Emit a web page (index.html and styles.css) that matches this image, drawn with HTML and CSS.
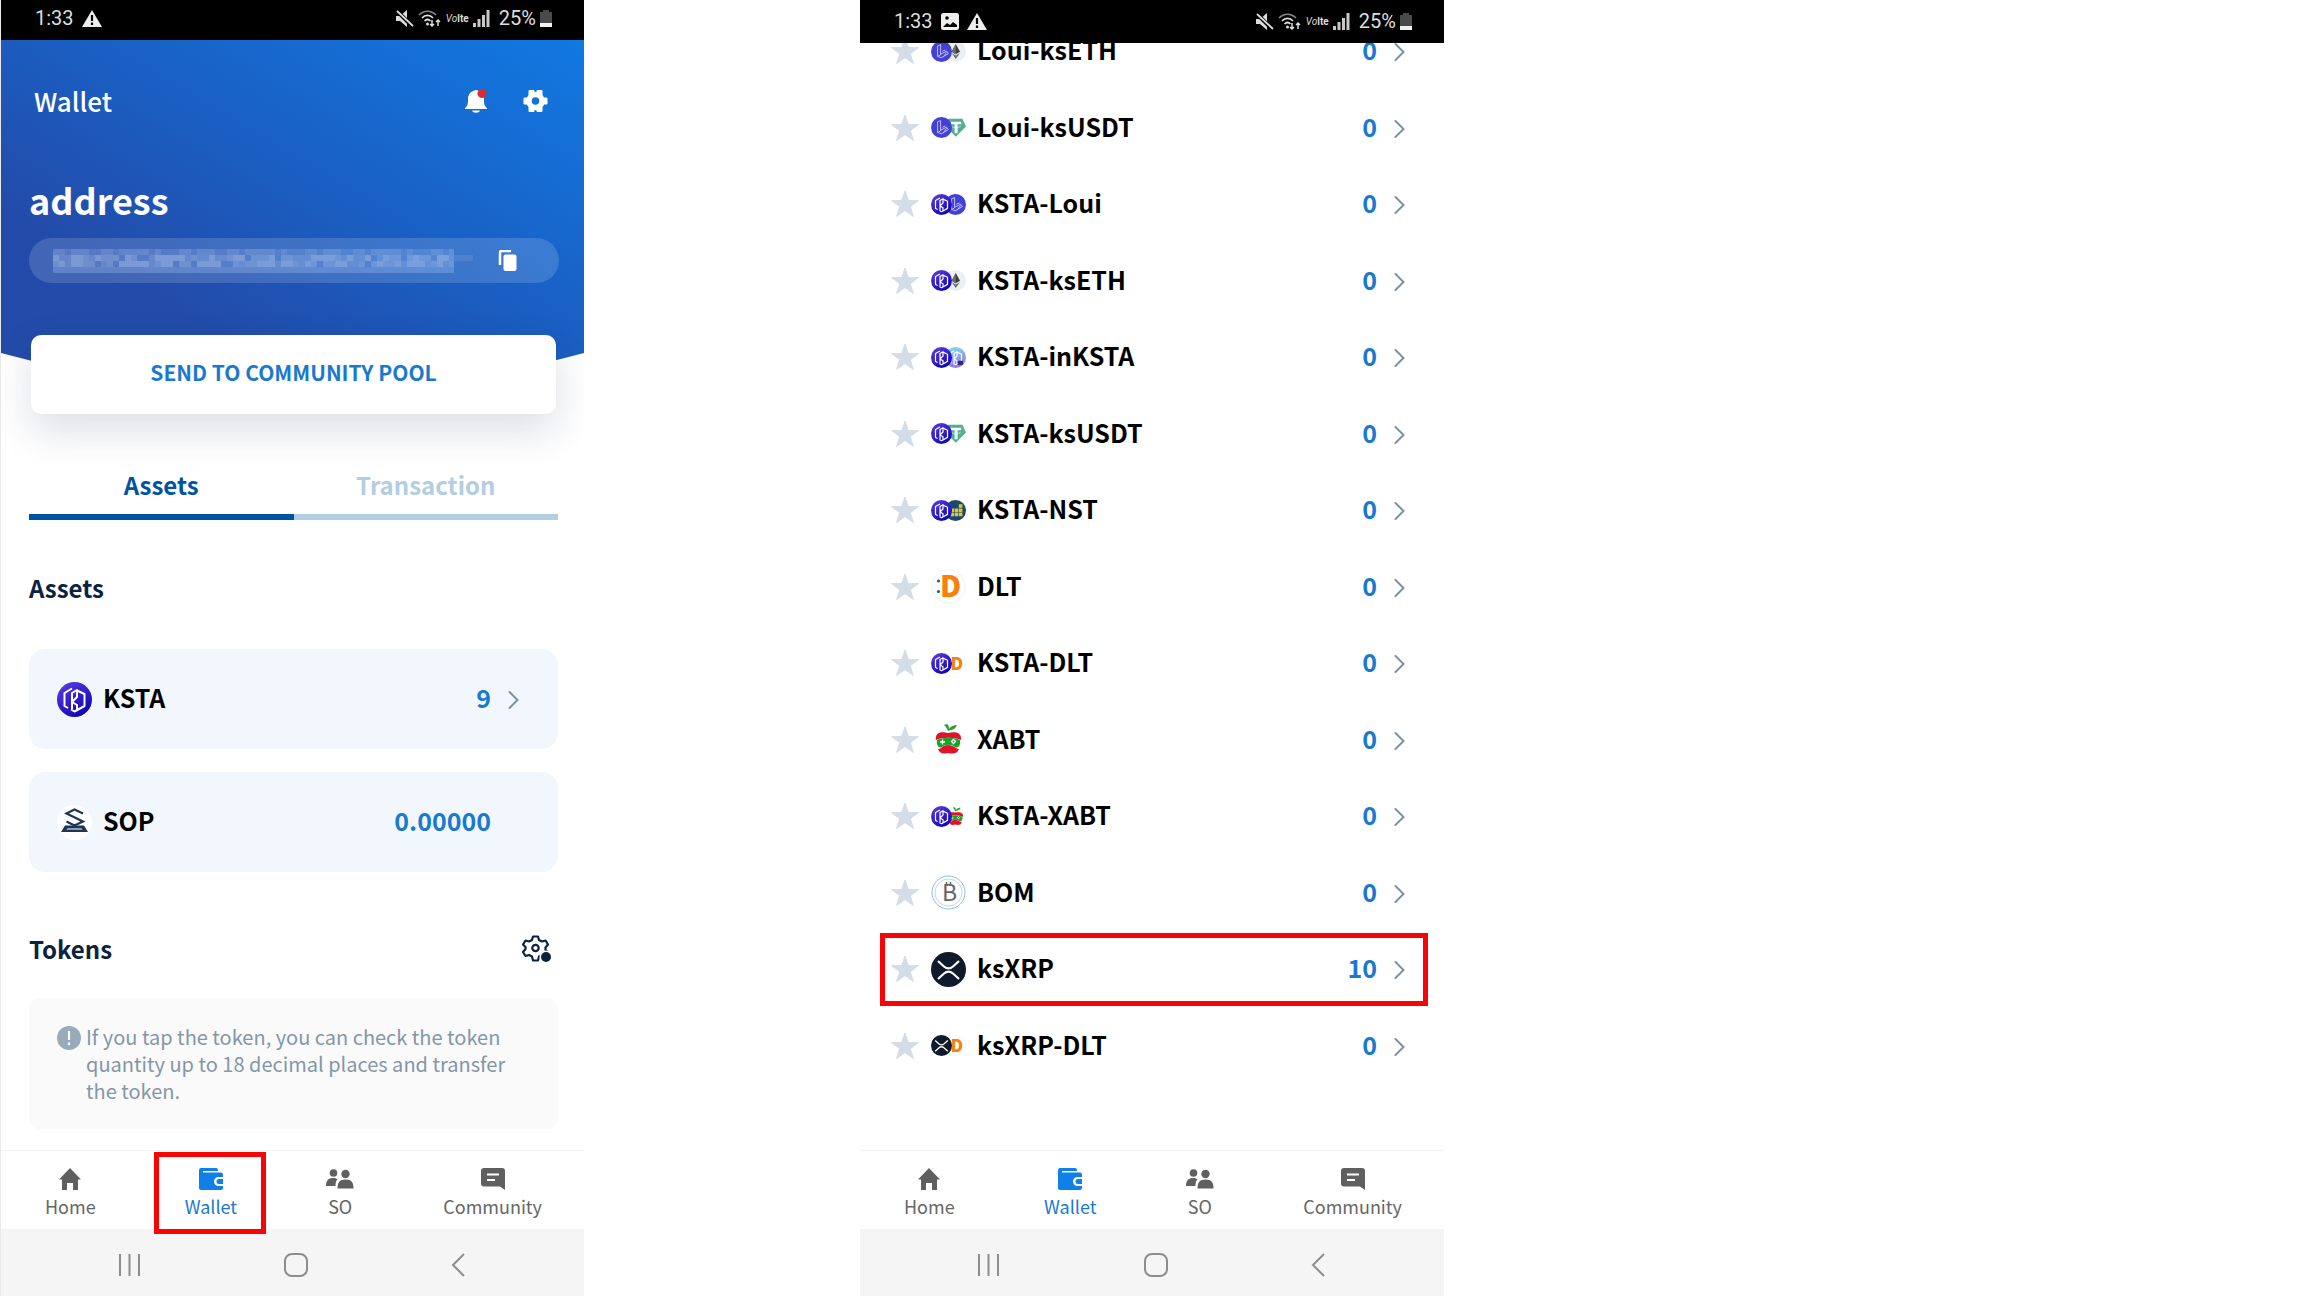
FILE: index.html
```
<!DOCTYPE html>
<html lang="en">
<head>
    <meta charset="UTF-8">
    <meta name="viewport" content="width=device-width, initial-scale=1.0">
    <title>Wallet</title>
    <link rel="stylesheet" href="styles.css">
</head>
<body>
    <!-- Shared icons -->
    <svg class="sprite" aria-hidden="true">
        <defs>
            <linearGradient id="kFill" x1="0" y1="0" x2="0.6" y2="1">
                <stop offset="0" stop-color="#5f3fe6"/>
                <stop offset="1" stop-color="#1206b4"/>
            </linearGradient>
            <linearGradient id="inFill" x1="0.4" y1="0" x2="0.7" y2="1">
                <stop offset="0" stop-color="#7fd8ee"/>
                <stop offset="1" stop-color="#9a6fe0"/>
            </linearGradient>
            <g id="kMark" fill="none" stroke="#fff" stroke-width="2" stroke-linejoin="round">
                <path d="M15 6.500 7.500 11v13L11 26"/>
                <path d="M20 8.500 27.500 12v12L17.500 29.500 14 27.500"/>
                <path d="M15 27V11l5-3v7l-5 5 5 3v5"/>
            </g>
            <symbol id="c-ksta" viewBox="0 0 35 35">
                <circle cx="17.500" cy="17.500" r="17.500" fill="url(#kFill)"/>
                <use href="#kMark"/>
            </symbol>
            <symbol id="c-inksta" viewBox="0 0 35 35">
                <circle cx="17.500" cy="17.500" r="17.500" fill="url(#inFill)"/>
                <use href="#kMark"/>
                <rect x="21" y="23" width="9" height="7" fill="#2b2a86"/>
            </symbol>
            <symbol id="c-loui" viewBox="0 0 35 35">
                <circle cx="17.500" cy="17.500" r="17.500" fill="#4340d6"/>
                <path d="M11 8l5-2v17l-5 3zM16 22l10-5 3 4-12 7-5-2M19 17l5-2M20 27l6-8" fill="none" stroke="#c4c6f6" stroke-width="1.600"/>
            </symbol>
            <symbol id="c-eth" viewBox="0 0 35 35">
                <circle cx="17.500" cy="17.500" r="17.500" fill="#eceff1"/>
                <path d="M18 5l7 13-7 4-7-4z" fill="#3c3c3d"/>
                <path d="M18 5v17l-7-4zM11 20l7 4 7-4-7 10z" fill="#6d6d6f"/>
            </symbol>
            <symbol id="c-usdt" viewBox="0 0 35 35">
                <path d="M5 3h24l6 13-17 17L1 16z" fill="#50af95"/>
                <path d="M9 8h18v4h-6v15h-5V12H9z" fill="#fff"/>
                <path d="M10 16c5 2 11 2 16 0" fill="none" stroke="#fff"/>
            </symbol>
            <symbol id="c-nst" viewBox="0 0 35 35">
                <circle cx="17.500" cy="17.500" r="17.500" fill="#174a6e"/>
                <path d="M9 21h6v6H9zM16 21h6v6h-6zM23 21h6v6h-6zM16 14h6v6h-6zM23 14h6v6h-6zM23 7h6v6h-6zM9 14h6v6H9z" fill="#e8c52c"/>
            </symbol>
            <symbol id="c-dlt" viewBox="0 0 35 35">
                <circle cx="17.500" cy="17.500" r="16.500" fill="#fff" stroke="#f1f1f1"/>
                <circle cx="7.500" cy="12" r="1.600" fill="#1f5f9c"/>
                <circle cx="7.500" cy="22.500" r="1.600" fill="#1f5f9c"/>
                <text x="9" y="28" class="coin-d">D</text>
            </symbol>
            <symbol id="c-xabt" viewBox="0 0 35 35">
                <path d="M17 9c-1-3-2-4-4-6l3-1c2 2 2 3 2 5 2-3 5-4 8-4-1 3-4 5-7 5z" fill="#1ea02b"/>
                <path d="M5 18c-1-7 4-9 12-7 8-2 14 0 13 7-6-3-19-3-25 0z" fill="#e3122b"/>
                <path d="M6 18c6-3 17-3 23 0 1 5-2 9-5 7-3-3-10-3-13 0-3 2-6-2-5-7z" fill="#16a52a"/>
                <path d="M9 20h5M11.500 17.500v5M22.500 17.500l2 2-2 2-2-2z" stroke="#fff" stroke-width="1.300" fill="none"/>
                <path d="M7 27c4 0 4-4 10-4s8 4 11 4c-2 5-5 5-11 4-5 1-8 1-10-4z" fill="#e3122b"/>
            </symbol>
            <symbol id="c-bom" viewBox="0 0 35 35">
                <circle cx="17.500" cy="17.500" r="16.500" fill="#fff" stroke="#8fbfd6"/>
                <circle cx="17.500" cy="17.500" r="13.500" fill="none" stroke="#bcd9e6"/>
                <path d="M15.500 7v3M19.500 7v3" stroke="#666" stroke-width="1.500"/>
                <text x="11" y="26" class="coin-b">B</text>
            </symbol>
            <symbol id="c-xrp" viewBox="0 0 35 35">
                <circle cx="17.500" cy="17.500" r="17.500" fill="#0f1b2b"/>
                <path d="M7 9l6 5.500c3 2.500 6 2.500 9 0L28 9M7 27l6-5.500c3-2.500 6-2.500 9 0l6 5.500" fill="none" stroke="#fff" stroke-width="2.200"/>
            </symbol>
            <symbol id="c-sop" viewBox="0 0 35 35">
                <circle cx="17.500" cy="17.500" r="17.500" fill="#fff"/>
                <path d="M26 8.500 17.500 4.500 9.500 8.500 26 16.500 17.500 20.500 9.500 16.500" fill="none" stroke="#1f3554" stroke-width="2.200"/>
                <path d="M8 20.500h19l4 6.500H4z" fill="#1f3554"/>
                <path d="M10.500 23h14l1 2h-16z" fill="#8e9db3"/>
            </symbol>
            <symbol id="i-star" viewBox="0 0 30 28">
                <path d="M15 1l3.300 9.600h10.200l-8.200 6.100 3.100 9.800L15 20.600l-8.400 5.900 3.100-9.800-8.200-6.100h10.200z" fill="#d3dde7" stroke="#d3dde7" stroke-linejoin="round"/>
            </symbol>
            <symbol id="i-chevron" viewBox="0 0 12 18">
                <path d="M1.500 1 9.500 9l-8 8" fill="none" stroke="#7b91a7" stroke-width="2" stroke-linecap="round"/>
            </symbol>
            <symbol id="i-warn" viewBox="0 0 20 17">
                <path d="M10 0l10 17H0z" fill="#eee"/>
                <path d="M10 5v6M10 12.500v2.500" stroke="#000" stroke-width="2.200"/>
            </symbol>
            <symbol id="i-photo" viewBox="0 0 18 17">
                <rect width="18" height="17" rx="2.500" fill="#eee"/>
                <circle cx="6" cy="5" r="1.800" fill="#000"/>
                <path d="M2 14l4-4 3 2 3-3 4 3v2z" fill="#000"/>
            </symbol>
            <symbol id="i-mute" viewBox="0 0 18 17">
                <path d="M0 6h4l7-6v17l-7-6H0z" fill="#ddd"/>
                <path d="M0 0l17 17" stroke="#000" stroke-width="4"/>
                <path d="M1 1l16 15" stroke="#ddd" stroke-width="1.800"/>
            </symbol>
            <symbol id="i-wifi" viewBox="0 0 24 17">
                <g fill="none" stroke="#ddd" stroke-width="1.700">
                    <path d="M1 5c5-5 12-5 17 0" stroke="#888"/>
                    <path d="M4 8c3-3.500 8-3.500 11 0M6.500 11c2-2 4-2 6 0"/>
                    <path d="M14 10v6M12 14l2 2 2-2M20 16v-6M18 12l2-2 2 2" stroke-width="1.500"/>
                </g>
                <circle cx="9.500" cy="14" r="1.500" fill="#ddd"/>
            </symbol>
            <symbol id="i-signal" viewBox="0 0 17 17">
                <path d="M0 13h3v4H0zM4.500 9h3v8h-3zM9 5h3v12H9zM13.500 0h3v17h-3z" fill="#c8c8c8"/>
            </symbol>
            <symbol id="i-battery" viewBox="0 0 12 17">
                <path d="M3 0h6v2h3v11H0V2h3z" fill="#4a4a4a"/>
                <path d="M0 13h12v4H0z" fill="#f2f2f2"/>
            </symbol>
            <symbol id="i-home" viewBox="0 0 22 22">
                <path d="M11 0l11 11.500h-3V22h-5v-7H8v7H3V11.500H0z" fill="#5f5f5f"/>
            </symbol>
            <symbol id="i-wallet" viewBox="0 0 24 22">
                <path d="M2 0h15a2 2 0 0 1 2 2v1H4v1.500h18a2 2 0 0 1 2 2V9h-4.500a4.500 4.500 0 0 0 0 9H24v2a2 2 0 0 1-2 2H2a2 2 0 0 1-2-2V2a2 2 0 0 1 2-2z" fill="#1180e6"/>
                <path d="M24 11h-4a2.500 2.500 0 0 0 0 5h4z" fill="#1180e6"/>
            </symbol>
            <symbol id="i-people" viewBox="0 0 28 22">
                <g fill="#5f5f5f">
                    <circle cx="7.500" cy="5" r="3.800"/>
                    <path d="M0 18c0-6 3-8 7-8 2 0 3 .4 4.500 1.300C10 13 9.500 15 9.500 18z"/>
                    <circle cx="19.500" cy="6" r="4.200"/>
                    <path d="M11.500 20.500c0-6 2-9 8-9s8 3 8 9z"/>
                </g>
            </symbol>
            <symbol id="i-chat" viewBox="0 0 24 22">
                <path d="M3 0h18a3 3 0 0 1 3 3v19l-5-3.500H3a3 3 0 0 1-3-3V3a3 3 0 0 1 3-3z" fill="#5f5f5f"/>
                <path d="M6 6.500h12M6 12h8" stroke="#fff" stroke-width="2.200"/>
            </symbol>
        </defs>
    </svg>

    <section class="phone wallet">
        <div class="status">
            <span>1:33</span>
            <svg width="20" height="17"><use href="#i-warn"/></svg>
            <div class="status-right">
                <svg width="18" height="17"><use href="#i-mute"/></svg>
                <svg width="24" height="17"><use href="#i-wifi"/></svg>
                <span class="lte">Vo<b>lte</b></span>
                <svg width="17" height="17"><use href="#i-signal"/></svg>
                <span class="percent">25%</span>
                <svg width="12" height="17"><use href="#i-battery"/></svg>
            </div>
        </div>

        <header class="hero">
            <div class="hero-top">
                <h1>Wallet</h1>
                <button class="icon-btn" aria-label="Notifications">
                    <svg width="22" height="24" viewBox="0 0 22 24">
                        <path d="M0 19c3-2 3-5 3-9 0-5 3-8 8-9 5 1 8 4 8 9 0 4 0 7 3 9v1H0z" fill="#fff"/>
                        <path d="M7 21.500h8c-1 3-7 3-8 0z" fill="#fff"/>
                        <circle cx="17" cy="4.500" r="4.500" fill="#d92d35"/>
                    </svg>
                </button>
                <button class="icon-btn" aria-label="Settings">
                    <svg width="25" height="24" viewBox="0 0 24 24">
                        <circle cx="12" cy="12" r="6.500" fill="none" stroke="#fff" stroke-width="5.500"/>
                        <path d="M5.500 1.500h5v5h-5zM13.500 1.500h5v5h-5zM5.500 17.500h5v5h-5zM13.500 17.500h5v5h-5zM.500 9h5v6h-5zM18.500 9h5v6h-5z" fill="#fff" stroke="#fff" stroke-linejoin="round"/>
                    </svg>
                </button>
            </div>
            <h2 class="address-title">address</h2>
            <div class="address">
                <!-- masked address -->
                <svg class="mask" viewBox="0 0 420 24" width="420" height="24" shape-rendering="crispEdges" fill="none" stroke="#a9c4ee" stroke-width="6" aria-label="Hidden address">
                    <path d="M0 12H401" opacity=".2" stroke-width="24"/>
                    <path d="M0 3H401" opacity=".16" stroke-dasharray="12 6 18 12 12 6 30 6 6 18"/>
                    <path d="M0 9H401" opacity=".3" stroke-dasharray="6 12 18 6 24 6 12 18 30 6 6 12"/>
                    <path d="M0 9H401" opacity=".2" stroke-dasharray="30 6 12 24 6 18 42 6"/>
                    <path d="M401 9h19" opacity=".15"/>
                    <path d="M0 15H401" opacity=".3" stroke-dasharray="12 6 24 12 6 6 30 6 18 6"/>
                    <path d="M6 15H401" opacity=".2" stroke-dasharray="24 18 6 12 36 6 12 24"/>
                    <path d="M0 21H401" opacity=".14"/>
                </svg>
                <button class="icon-btn" aria-label="Copy address">
                    <svg width="20" height="22" viewBox="0 0 20 22">
                        <path d="M2 15V2.500A1.500 1.500 0 0 1 3.500 1H13" fill="none" stroke="#fff" stroke-width="2.500"/>
                        <rect x="5.500" y="4.500" width="13" height="16.500" rx="2" fill="#fff"/>
                    </svg>
                </button>
            </div>
        </header>

        <main class="content">
            <button class="send">SEND TO COMMUNITY POOL</button>

            <nav class="tabs">
                <a href="#" class="active">Assets</a>
                <a href="#">Transaction</a>
            </nav>

            <h3>Assets</h3>
            <div class="cards">
                <a href="#" class="card">
                    <svg width="35" height="35"><use href="#c-ksta"/></svg>
                    <span class="name">KSTA</span>
                    <span class="amount">9</span>
                    <svg class="chevron" width="12" height="18"><use href="#i-chevron"/></svg>
                </a>
                <div class="card">
                    <svg width="35" height="35"><use href="#c-sop"/></svg>
                    <span class="name">SOP</span>
                    <span class="amount">0.00000</span>
                    <span class="no-chevron"></span>
                </div>
            </div>

            <div class="tokens-head">
                <h3>Tokens</h3>
                <button class="icon-btn" aria-label="Token settings">
                    <svg width="30" height="28" viewBox="0 0 30 28">
                        <path d="M11 1.500h5l1 3.500 3 1.500 3.500-1 2.500 4-2.500 3v2.500l2 2-3 4-3-1-2.500 1.500-1 4h-5l-1-4L7 20l-3.500 1L1 17l2.500-3v-2L1 9.500l2.500-4L7 6.500 10 5z" fill="none" stroke="#0b2340" stroke-width="2.200" stroke-linejoin="round"/>
                        <circle cx="13.500" cy="13" r="3.200" fill="none" stroke="#0b2340" stroke-width="2.200"/>
                        <circle cx="24" cy="22" r="6.500" fill="#fff"/>
                        <circle cx="24" cy="22" r="5" fill="#0b2340"/>
                    </svg>
                </button>
            </div>

            <div class="info">
                <svg width="24" height="24" viewBox="0 0 24 24">
                    <circle cx="12" cy="12" r="12" fill="#98abbd"/>
                    <path d="M12 5v9M12 16.500v2.500" stroke="#fff" stroke-width="2.200"/>
                </svg>
                <p>If you tap the token, you can check the token quantity up to 18 decimal places and transfer the token.</p>
            </div>
        </main>

        <nav class="tabbar">
            <a href="#"><svg width="22" height="22"><use href="#i-home"/></svg>Home</a>
            <a href="#" class="active marked"><svg width="24" height="22"><use href="#i-wallet"/></svg>Wallet</a>
            <a href="#"><svg width="28" height="22"><use href="#i-people"/></svg>SO</a>
            <a href="#"><svg width="24" height="22"><use href="#i-chat"/></svg>Community</a>
        </nav>
        <div class="softkeys">
            <button class="icon-btn" aria-label="Recents"><svg width="23" height="24"><path d="M2 1v22M11.500 1v22M21 1v22" stroke="#8d8d8d" stroke-width="2"/></svg></button>
            <button class="icon-btn" aria-label="Home"><svg width="24" height="24"><rect x="1" y="1" width="22" height="22" rx="7" fill="none" stroke="#8d8d8d" stroke-width="2"/></svg></button>
            <button class="icon-btn" aria-label="Back"><svg width="14" height="24"><path d="M13 1 2 12l11 11" fill="none" stroke="#8d8d8d" stroke-width="2"/></svg></button>
        </div>
    </section>

    <section class="phone list">
        <div class="status">
            <span>1:33</span>
            <svg width="18" height="17"><use href="#i-photo"/></svg>
            <svg width="20" height="17"><use href="#i-warn"/></svg>
            <div class="status-right">
                <svg width="18" height="17"><use href="#i-mute"/></svg>
                <svg width="24" height="17"><use href="#i-wifi"/></svg>
                <span class="lte">Vo<b>lte</b></span>
                <svg width="17" height="17"><use href="#i-signal"/></svg>
                <span class="percent">25%</span>
                <svg width="12" height="17"><use href="#i-battery"/></svg>
            </div>
        </div>

        <main class="token-screen">
            <ul id="tokenList" class="token-list">
                <!-- rows are filled in below -->
            </ul>
        </main>

        <nav class="tabbar">
            <a href="#"><svg width="22" height="22"><use href="#i-home"/></svg>Home</a>
            <a href="#" class="active"><svg width="24" height="22"><use href="#i-wallet"/></svg>Wallet</a>
            <a href="#"><svg width="28" height="22"><use href="#i-people"/></svg>SO</a>
            <a href="#"><svg width="24" height="22"><use href="#i-chat"/></svg>Community</a>
        </nav>
        <div class="softkeys">
            <button class="icon-btn" aria-label="Recents"><svg width="23" height="24"><path d="M2 1v22M11.500 1v22M21 1v22" stroke="#8d8d8d" stroke-width="2"/></svg></button>
            <button class="icon-btn" aria-label="Home"><svg width="24" height="24"><rect x="1" y="1" width="22" height="22" rx="7" fill="none" stroke="#8d8d8d" stroke-width="2"/></svg></button>
            <button class="icon-btn" aria-label="Back"><svg width="14" height="24"><path d="M13 1 2 12l11 11" fill="none" stroke="#8d8d8d" stroke-width="2"/></svg></button>
        </div>
    </section>

    <script>
        const tokens = [
            { name: "Loui-ksETH", coins: ["loui", "eth"], amount: 0 },
            { name: "Loui-ksUSDT", coins: ["loui", "usdt"], amount: 0 },
            { name: "KSTA-Loui", coins: ["ksta", "loui"], amount: 0 },
            { name: "KSTA-ksETH", coins: ["ksta", "eth"], amount: 0 },
            { name: "KSTA-inKSTA", coins: ["ksta", "inksta"], amount: 0 },
            { name: "KSTA-ksUSDT", coins: ["ksta", "usdt"], amount: 0 },
            { name: "KSTA-NST", coins: ["ksta", "nst"], amount: 0 },
            { name: "DLT", coins: ["dlt"], amount: 0 },
            { name: "KSTA-DLT", coins: ["ksta", "dlt"], amount: 0 },
            { name: "XABT", coins: ["xabt"], amount: 0 },
            { name: "KSTA-XABT", coins: ["ksta", "xabt"], amount: 0 },
            { name: "BOM", coins: ["bom"], amount: 0 },
            { name: "ksXRP", coins: ["xrp"], amount: 10, marked: true },
            { name: "ksXRP-DLT", coins: ["xrp", "dlt"], amount: 0 }
        ];

        // Two coins overlap, a single coin takes the whole box
        function coinIcon(coins) {
            if (coins.length === 1) {
                return `<use href="#c-${coins[0]}" width="35" height="35"/>`;
            }
            return `<use href="#c-${coins[1]}" x="14" y="7" width="21" height="21"/>
                    <use href="#c-${coins[0]}" x="0" y="7" width="21" height="21"/>`;
        }

        document.getElementById("tokenList").innerHTML = tokens.map(token => `
            <li class="${token.marked ? "marked" : ""}">
                <button class="icon-btn" aria-label="Favorite ${token.name}">
                    <svg width="30" height="28"><use href="#i-star"/></svg>
                </button>
                <a href="#">
                    <svg width="35" height="35">${coinIcon(token.coins)}</svg>
                    <span class="name">${token.name}</span>
                    <span class="amount">${token.amount}</span>
                    <svg class="chevron" width="12" height="18"><use href="#i-chevron"/></svg>
                </a>
            </li>
        `).join("");
    </script>
</body>
</html>
```
FILE: styles.css
```
* {
    box-sizing: border-box;
}

body {
    margin: 0;
    display: grid;
    grid-template-columns: 584fr 276fr 584fr 860fr;
    background: #fff;
    font-family: "Noto Sans CJK KR", "Noto Sans", sans-serif;
    color: #000;
}

h1,
h2,
h3,
p,
ul {
    margin: 0;
    padding: 0;
}

a {
    color: inherit;
    text-decoration: none;
}

svg {
    display: block;
    flex: none;
}

.sprite {
    position: absolute;
    width: 0;
    height: 0;
}

.coin-d {
    font-family: "Noto Sans CJK KR", sans-serif;
    font-size: 29px;
    font-weight: 900;
    fill: #f5820d;
}

.coin-b {
    font-family: "Noto Sans CJK KR", sans-serif;
    font-size: 23px;
    fill: #666;
}

.icon-btn {
    border: none;
    background: none;
    padding: 0;
    cursor: pointer;
}

.phone {
    height: 100vh;
    display: flex;
    flex-direction: column;
    overflow: hidden;
}

.wallet {
    grid-column: 1;
    border-left: 1px solid #e9e9e9;
}

.list {
    grid-column: 3;
}

/* Status bar */
.status {
    flex: none;
    display: flex;
    align-items: center;
    gap: 8px;
    height: 40px;
    padding: 0 32px 4px 34px;
    background: #000;
    color: #ddd;
    font-family: Roboto, sans-serif;
    font-size: 20px;
}

.list .status {
    height: 43px;
    padding-bottom: 1px;
}

.status-right {
    display: flex;
    align-items: center;
    margin-left: auto;
    gap: 4px;
}

.lte {
    width: 23px;
    font-size: 10px;
    font-style: italic;
}

.lte b {
    font-style: normal;
}

.percent {
    margin-left: 5px;
}

/* Blue header */
.hero {
    flex: none;
    padding: 41px 25px 102px 28px;
    color: #fff;
    background: linear-gradient(to bottom left, #1079e2, #1a60c4 42%, #234ba9 75%);
    clip-path: polygon(0 0, 100% 0, 100% 313px, 90% 328px, 50% 100%, 10% 328px, 0 313px);
}

.hero-top {
    display: flex;
    align-items: center;
    gap: 36px;
    padding: 0 11px 0 5px;
}

.hero-top h1 {
    flex: 1;
    font-size: 26px;
    line-height: 40px;
    font-weight: 500;
}

.address-title {
    margin-top: 54px;
    font-size: 36px;
    line-height: 48px;
    font-weight: 700;
}

.address {
    display: flex;
    align-items: center;
    justify-content: space-between;
    height: 45px;
    margin-top: 15px;
    padding: 0 41px 0 24px;
    border-radius: 23px;
    background: rgba(255, 255, 255, 0.15);
}

/* Wallet screen */
.content {
    flex: 1;
    position: relative;
    padding: 0 26px 0 28px;
}

.send {
    display: block;
    width: calc(100% - 4px);
    height: 79px;
    margin: -50px 2px 0;
    padding-bottom: 6px;
    border: none;
    border-radius: 10px;
    background: #fff;
    box-shadow: 0 16px 40px rgba(40, 50, 90, 0.16);
    font-family: inherit;
    font-size: 21px;
    font-weight: 700;
    color: #1979cf;
    cursor: pointer;
}

.tabs {
    display: flex;
    margin-top: 50px;
}

.tabs a {
    flex: 1;
    padding-bottom: 8px;
    border-bottom: 6px solid #b3cde2;
    font-size: 24px;
    line-height: 42px;
    font-weight: 700;
    text-align: center;
    color: #b3cde2;
}

.tabs a.active {
    color: #00539f;
    border-color: #00539f;
}

h3 {
    margin-top: 48px;
    font-size: 24px;
    line-height: 40px;
    font-weight: 700;
    color: #0b2340;
}

.cards {
    display: flex;
    flex-direction: column;
    gap: 23px;
    margin-top: 41px;
}

.card {
    display: flex;
    align-items: center;
    height: 100px;
    padding: 0 38px 0 28px;
    border-radius: 16px;
    background: #f2f7fe;
}

.name,
.amount {
    padding-bottom: 4px;
    font-size: 25px;
    line-height: 36px;
    font-weight: 700;
}

.name {
    flex: 1;
    margin-left: 11px;
}

.amount {
    margin-right: 17px;
    color: #1979cf;
}

.chevron {
    margin-top: 2px;
}

.no-chevron {
    width: 12px;
}

.tokens-head {
    display: flex;
    align-items: center;
    justify-content: space-between;
    margin-top: 57px;
    padding-right: 6px;
}

.tokens-head h3 {
    margin: 0;
}

.info {
    display: flex;
    gap: 5px;
    margin-top: 29px;
    padding: 25px 20px 25px 28px;
    border-radius: 10px;
    background: #fafafa;
    color: #8397a9;
}

.info svg {
    margin-top: 3px;
}

.info p {
    font-size: 20px;
    line-height: 27px;
}

/* Bottom bars */
.tabbar {
    flex: none;
    display: flex;
    justify-content: space-between;
    height: 79px;
    padding: 17px 42px 0 44px;
    border-top: 1px solid #eef2f2;
    background: #fff;
}

.tabbar a {
    position: relative;
    display: flex;
    flex-direction: column;
    align-items: center;
    gap: 4px;
    font-size: 18px;
    line-height: 24px;
    color: #666;
}

.tabbar a.active {
    color: #1979cf;
}

/* Red highlight frames */
.tabbar .marked::after,
.token-list .marked::after {
    content: "";
    position: absolute;
    border: 5px solid #f80404;
    pointer-events: none;
}

.tabbar .marked::after {
    inset: -16px -29px -5px -31px;
}

.token-list .marked::after {
    inset: 2px 16px 2px 20px;
}

.softkeys {
    flex: none;
    display: flex;
    align-items: center;
    justify-content: space-between;
    height: 67px;
    padding: 4px 119px 0 117px;
    background: #f5f5f5;
}

/* Token list, scrolled so the first row is cut by the status bar */
.token-screen {
    flex: 1;
    min-height: 0;
    overflow: hidden;
}

.token-list {
    display: flex;
    flex-direction: column;
    height: calc(100% - 36px);
    margin-top: -30px;
    list-style: none;
}

.token-list li {
    flex: 1;
    position: relative;
    display: flex;
    align-items: center;
    gap: 11px;
    padding: 0 38px 0 30px;
}

.token-list a {
    flex: 1;
    display: flex;
    align-items: center;
}
```
